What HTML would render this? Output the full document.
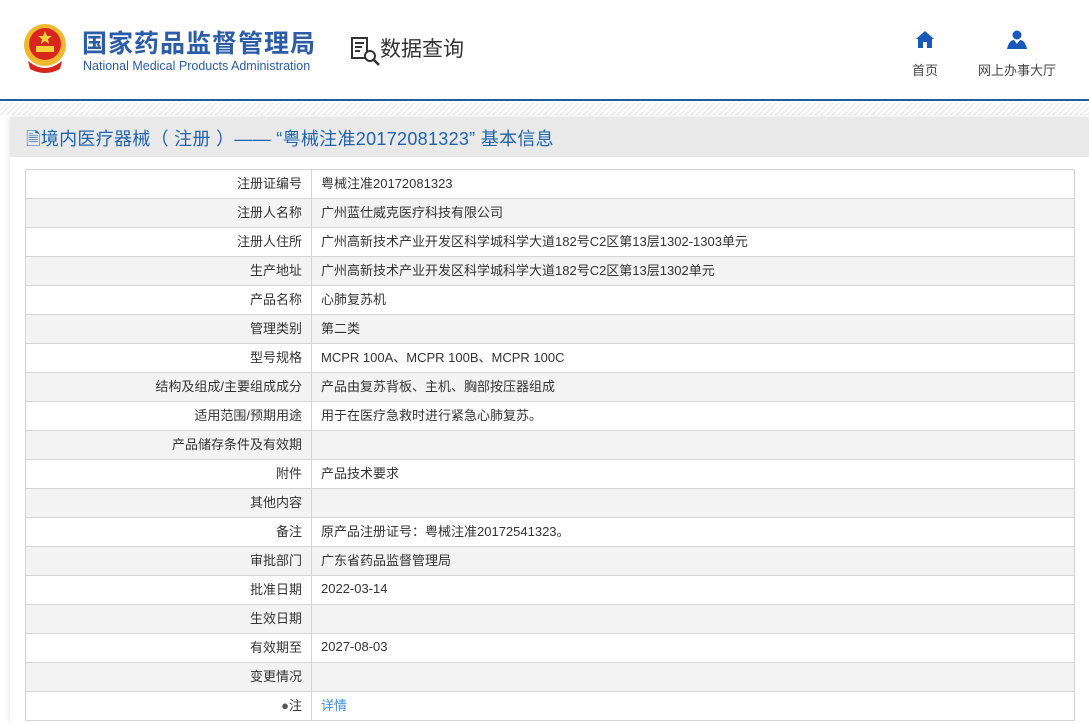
<!DOCTYPE html>
<html><head><meta charset="utf-8"><style>
*{margin:0;padding:0;box-sizing:border-box}
body{width:1089px;height:724px;overflow:hidden;background:#fff;font-family:"Liberation Sans","Noto Sans CJK SC",sans-serif;position:relative}
.hdr{height:101px;border-bottom:2px solid #1f5e9e;position:relative}
.t1{position:absolute;left:82px;top:24px;font-size:25px;font-weight:bold;color:#2a5caa;letter-spacing:1px}
.t2{position:absolute;left:83px;top:59px;font-size:12.5px;color:#2a5caa}
.dq{position:absolute;left:380px;top:33px;font-size:21px;color:#333}
.nav{position:absolute;top:60px;font-size:13px;color:#444}
.hatch{position:absolute;top:103px;left:0;width:1089px;height:12px;background:repeating-linear-gradient(135deg,#f0f0f0 0 2px,#fff 2px 4px)}
.panel{position:absolute;left:10px;top:117px;width:1079px;height:607px;background:#fff;box-shadow:0 0 6px rgba(0,0,0,.12)}
.title{height:40px;background:#e9e9e9;font-size:18px;color:#1d63b0;padding:8px 0 0 16px;letter-spacing:0.3px}
table{position:absolute;left:15px;top:52px;width:1050px;border-collapse:collapse;font-size:13px;color:#333}
td{height:29px;border:1px solid #d4d4d4;padding:0 9px 3px}
td:first-child{width:286px;text-align:right}
tr:nth-child(even){background:#f3f3f3}
a{color:#3a8ee6;text-decoration:none}
</style></head><body>
<div class="hdr">
<svg style="position:absolute;left:22px;top:23px" width="46" height="50" viewBox="0 0 46 50"><circle cx="23" cy="22" r="21" fill="#f1b82d"/><circle cx="23" cy="21" r="16" fill="#d9261c"/><polygon points="23,8 25,13 30,13 26,16 27,21 23,18 19,21 20,16 16,13 21,13" fill="#f7d23a"/><rect x="14" y="23" width="18" height="6" fill="#f7d23a"/><path d="M6 38 Q23 52 40 38 L38 46 Q23 54 8 46Z" fill="#d9261c"/></svg>
<div class="t1">国家药品监督管理局</div>
<div class="t2">National Medical Products Administration</div>
<svg style="position:absolute;left:351px;top:37px" width="30" height="30" viewBox="0 0 30 30"><rect x="1" y="1" width="15" height="20" fill="none" stroke="#333" stroke-width="2"/><path d="M4 6h9M4 10h7M4 14h5" stroke="#333" stroke-width="2"/><circle cx="19" cy="19" r="5" fill="#fff" stroke="#333" stroke-width="2"/><path d="M23 23l5 5" stroke="#333" stroke-width="2.5"/></svg>
<div class="dq">数据查询</div>
<svg style="position:absolute;left:916px;top:31px" width="18" height="17" viewBox="0 0 18 17"><path d="M9 0L18 8H16V17H11V11H7V17H2V8H0Z" fill="#1858b8"/></svg>
<div class="nav" style="left:912px">首页</div>
<svg style="position:absolute;left:1007px;top:30px" width="20" height="19" viewBox="0 0 20 19"><circle cx="10" cy="5" r="4.5" fill="#1858b8"/><path d="M0 19Q2 10 7 10L10 14L13 10Q18 10 20 19Z" fill="#1858b8"/></svg>
<div class="nav" style="left:978px">网上办事大厅</div>
</div>
<div class="hatch"></div>
<div class="panel">
<div class="title">🗎境内医疗器械（ 注册 ）——&nbsp;“粤械注准20172081323”&nbsp;基本信息</div>
<table>
<tr><td>注册证编号</td><td>粤械注准20172081323</td></tr>
<tr><td>注册人名称</td><td>广州蓝仕威克医疗科技有限公司</td></tr>
<tr><td>注册人住所</td><td>广州高新技术产业开发区科学城科学大道182号C2区第13层1302-1303单元</td></tr>
<tr><td>生产地址</td><td>广州高新技术产业开发区科学城科学大道182号C2区第13层1302单元</td></tr>
<tr><td>产品名称</td><td>心肺复苏机</td></tr>
<tr><td>管理类别</td><td>第二类</td></tr>
<tr><td>型号规格</td><td>MCPR 100A、MCPR 100B、MCPR 100C</td></tr>
<tr><td>结构及组成/主要组成成分</td><td>产品由复苏背板、主机、胸部按压器组成</td></tr>
<tr><td>适用范围/预期用途</td><td>用于在医疗急救时进行紧急心肺复苏。</td></tr>
<tr><td>产品储存条件及有效期</td><td></td></tr>
<tr><td>附件</td><td>产品技术要求</td></tr>
<tr><td>其他内容</td><td></td></tr>
<tr><td>备注</td><td>原产品注册证号：粤械注准20172541323。</td></tr>
<tr><td>审批部门</td><td>广东省药品监督管理局</td></tr>
<tr><td>批准日期</td><td>2022-03-14</td></tr>
<tr><td>生效日期</td><td></td></tr>
<tr><td>有效期至</td><td>2027-08-03</td></tr>
<tr><td>变更情况</td><td></td></tr>
<tr><td><span style="color:#555">●</span>注</td><td><a>详情</a></td></tr>
</table>
</div>
</body></html>
